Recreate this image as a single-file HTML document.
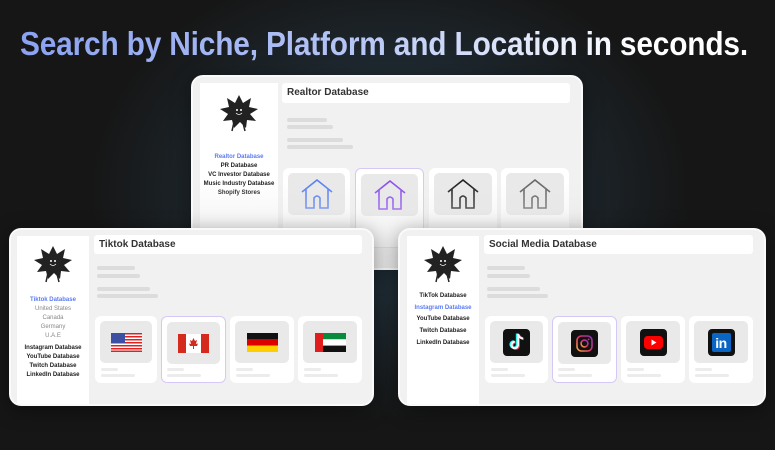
<!DOCTYPE html>
<html><head><meta charset="utf-8"><style>
*{margin:0;padding:0;box-sizing:border-box}
body{width:775px;height:450px;overflow:hidden;background:#161616;font-family:"Liberation Sans",sans-serif;position:relative}
.glow{position:absolute;left:0;top:0;width:775px;height:450px;background:radial-gradient(ellipse 300px 230px at 390px 190px,rgba(75,120,145,.8) 0%,rgba(45,75,95,.45) 40%,rgba(22,22,22,0) 100%)}
h1{position:absolute;left:20px;top:25px;white-space:nowrap;font-size:33px;font-weight:bold;letter-spacing:-0.2px;background:linear-gradient(90deg,#8aa2f2 0%,#b4c4f4 45%,#ffffff 85%);-webkit-background-clip:text;background-clip:text;color:transparent;transform-origin:left top}
.card{position:absolute;background:#f1f1f1;border-radius:12px;border:2px solid #fafafa;box-shadow:0 4px 20px rgba(0,0,0,.4);overflow:hidden}
.side{position:absolute;background:#fff;text-align:center}
.hdr{position:absolute;background:#fff;border-radius:3px;font-weight:bold;font-size:10px;color:#333;padding-left:5px;line-height:19px}
.sk{position:absolute;height:4px;border-radius:2px;background:#dcdcdc}
.tile{position:absolute;background:#fff;border-radius:6px}
.tile.sel{border:1px solid #d6c8f6}
.inner{position:absolute;left:5px;top:5px;right:5px;height:42px;background:#e9e9e9;border-radius:5px;display:flex;align-items:center;justify-content:center}
.tl1,.tl2{position:absolute;height:3px;background:#ececec;border-radius:2px;left:6px}
.tl1{top:52px;width:17px}.tl2{top:58px;width:34px}
.nav{font-size:6px;font-weight:bold;color:#222;line-height:9px}
.nav .a{color:#5b7cf5}.nav .g{color:#888;font-weight:normal}
</style></head><body>
<div class="glow"></div>
<h1>Search by Niche, Platform and Location in seconds.</h1>

<!-- Top card -->
<div class="card" style="left:191px;top:75px;width:392px;height:195px">
 <div class="side" style="left:7px;top:6px;width:78px;height:190px">
  <svg width="40" height="42" viewBox="0 0 40 42" style="margin-top:10px"><polygon points="20,2 24,10 32,5 30,14 39,16 31,21 37,28 28,27 27,35 21,29 15,35 13,27 4,28 9,21 1,16 10,14 8,5 16,10" fill="#222"/><path d="M15 29 L13 38 M24 30 L26 38" stroke="#222" stroke-width="1.5" fill="none"/><circle cx="18" cy="17" r="1" fill="#fff"/><circle cx="22" cy="17" r="1" fill="#fff"/><path d="M17 20 Q20 23 23 20" stroke="#fff" stroke-width=".8" fill="none"/></svg>
  <div class="nav" style="margin-top:13px"><div class="a">Realtor Database</div><div>PR Database</div><div>VC Investor Database</div><div>Music Industry Database</div><div>Shopify Stores</div></div>
 </div>
 <div class="hdr" style="left:89px;top:6px;width:288px;height:20px">Realtor Database</div>
 <div class="sk" style="left:94px;top:41px;width:40px"></div><div class="sk" style="left:94px;top:48px;width:46px"></div>
 <div class="sk" style="left:94px;top:61px;width:56px"></div><div class="sk" style="left:94px;top:68px;width:66px"></div>
 <div class="tile" style="left:90px;top:91px;width:67px;height:80px"><div class="inner"><svg width="34" height="32" viewBox="0 0 34 32"><path d="M2 14 L17 2 L32 14 M6 11 V30 H14 V20 Q17 16 20 20 V30 H28 V11" stroke="#5b80f5" stroke-width="1.6" fill="none"/></svg></div></div>
 <div class="tile sel" style="left:162px;top:91px;width:69px;height:80px"><div class="inner"><svg width="34" height="32" viewBox="0 0 34 32"><path d="M2 14 L17 2 L32 14 M6 11 V30 H14 V20 Q17 16 20 20 V30 H28 V11" stroke="#8c4ff0" stroke-width="1.6" fill="none"/></svg></div></div>
 <div class="tile" style="left:236px;top:91px;width:68px;height:80px"><div class="inner"><svg width="34" height="32" viewBox="0 0 34 32"><path d="M2 14 L17 2 L32 14 M6 11 V30 H14 V20 Q17 16 20 20 V30 H28 V11" stroke="#222" stroke-width="1.6" fill="none"/></svg></div></div>
 <div class="tile" style="left:308px;top:91px;width:68px;height:80px"><div class="inner"><svg width="34" height="32" viewBox="0 0 34 32"><path d="M2 14 L17 2 L32 14 M6 11 V30 H14 V20 Q17 16 20 20 V30 H28 V11" stroke="#666" stroke-width="1.6" fill="none"/></svg></div></div>
 <div style="position:absolute;left:0;top:105px;width:100%;height:90px;background:linear-gradient(rgba(255,255,255,0),rgba(230,230,230,.85))"></div>
</div>

<!-- Left card -->
<div class="card" style="left:9px;top:228px;width:365px;height:178px">
 <div class="side" style="left:6px;top:6px;width:72px;height:168px">
  <svg width="40" height="42" viewBox="0 0 40 42" style="margin-top:8px"><polygon points="20,2 24,10 32,5 30,14 39,16 31,21 37,28 28,27 27,35 21,29 15,35 13,27 4,28 9,21 1,16 10,14 8,5 16,10" fill="#222"/><path d="M15 29 L13 38 M24 30 L26 38" stroke="#222" stroke-width="1.5" fill="none"/><circle cx="18" cy="17" r="1" fill="#fff"/><circle cx="22" cy="17" r="1" fill="#fff"/><path d="M17 20 Q20 23 23 20" stroke="#fff" stroke-width=".8" fill="none"/></svg>
  <div class="nav" style="margin-top:5px"><div class="a">Tiktok Database</div><div class="g">United States</div><div class="g">Canada</div><div class="g">Germany</div><div class="g">U.A.E</div><div style="margin-top:3px">Instagram Database</div><div>YouTube Database</div><div>Twitch Database</div><div>LinkedIn Database</div></div>
 </div>
 <div class="hdr" style="left:83px;top:5px;width:268px;height:19px">Tiktok Database</div>
 <div class="sk" style="left:86px;top:36px;width:38px"></div><div class="sk" style="left:86px;top:44px;width:43px"></div>
 <div class="sk" style="left:86px;top:57px;width:53px"></div><div class="sk" style="left:86px;top:64px;width:61px"></div>
 <div class="tile" style="left:84px;top:86px;width:62px;height:67px"><div class="inner"><svg width="31" height="19" viewBox="0 0 31 19"><rect width="31" height="19" fill="#fff"/><g fill="#d22"><rect y="0" width="31" height="1.5"/><rect y="3" width="31" height="1.5"/><rect y="6" width="31" height="1.5"/><rect y="9" width="31" height="1.5"/><rect y="12" width="31" height="1.5"/><rect y="15" width="31" height="1.5"/><rect y="17.5" width="31" height="1.5"/></g><rect width="14" height="10" fill="#3c4fa0"/></svg></div></div>
 <div class="tile sel" style="left:150px;top:86px;width:65px;height:67px"><div class="inner"><svg width="31" height="19" viewBox="0 0 31 19"><rect width="31" height="19" fill="#fff"/><rect width="8" height="19" fill="#d52b1e"/><rect x="23" width="8" height="19" fill="#d52b1e"/><path d="M15.5 4 L17 7 L19 6 L18 10 L20 9.5 L19 12 L16 12 L16 15 L15 15 L15 12 L12 12 L11 9.5 L13 10 L12 6 L14 7 Z" fill="#d52b1e"/></svg></div></div>
 <div class="tile" style="left:219px;top:86px;width:64px;height:67px"><div class="inner"><svg width="31" height="19" viewBox="0 0 31 19"><rect width="31" height="6.4" fill="#111"/><rect y="6.3" width="31" height="6.4" fill="#dd0000"/><rect y="12.6" width="31" height="6.4" fill="#ffce00"/></svg></div></div>
 <div class="tile" style="left:287px;top:86px;width:64px;height:67px"><div class="inner"><svg width="31" height="19" viewBox="0 0 31 19"><rect width="31" height="6.4" fill="#0a8a3c"/><rect y="6.3" width="31" height="6.4" fill="#fff"/><rect y="12.6" width="31" height="6.4" fill="#111"/><rect width="8" height="19" fill="#e01e1e"/></svg></div></div>
 <div class="tile" style="left:84px;top:86px;width:62px;height:67px;background:none"><div class="tl1"></div><div class="tl2"></div></div>
 <div class="tile" style="left:150px;top:86px;width:65px;height:67px;background:none"><div class="tl1"></div><div class="tl2"></div></div>
 <div class="tile" style="left:219px;top:86px;width:64px;height:67px;background:none"><div class="tl1"></div><div class="tl2"></div></div>
 <div class="tile" style="left:287px;top:86px;width:64px;height:67px;background:none"><div class="tl1"></div><div class="tl2"></div></div>
</div>

<!-- Right card -->
<div class="card" style="left:398px;top:228px;width:368px;height:178px">
 <div class="side" style="left:7px;top:6px;width:72px;height:168px">
  <svg width="40" height="42" viewBox="0 0 40 42" style="margin-top:8px"><polygon points="20,2 24,10 32,5 30,14 39,16 31,21 37,28 28,27 27,35 21,29 15,35 13,27 4,28 9,21 1,16 10,14 8,5 16,10" fill="#222"/><path d="M15 29 L13 38 M24 30 L26 38" stroke="#222" stroke-width="1.5" fill="none"/><circle cx="18" cy="17" r="1" fill="#fff"/><circle cx="22" cy="17" r="1" fill="#fff"/><path d="M17 20 Q20 23 23 20" stroke="#fff" stroke-width=".8" fill="none"/></svg>
  <div class="nav" style="line-height:11.7px"><div>TikTok Database</div><div class="a">Instagram Database</div><div>YouTube Database</div><div>Twitch Database</div><div>LinkedIn Database</div></div>
 </div>
 <div class="hdr" style="left:84px;top:5px;width:269px;height:19px">Social Media Database</div>
 <div class="sk" style="left:87px;top:36px;width:38px"></div><div class="sk" style="left:87px;top:44px;width:43px"></div>
 <div class="sk" style="left:87px;top:57px;width:53px"></div><div class="sk" style="left:87px;top:64px;width:61px"></div>
 <div class="tile" style="left:85px;top:86px;width:63px;height:67px"><div class="inner"><div style="width:27px;height:27px;background:#111;border-radius:4px;display:flex;align-items:center;justify-content:center"><svg width="16" height="18" viewBox="0 0 16 18"><path d="M9 1 V12 A3.2 3.2 0 1 1 5.8 8.8 M9 1 Q10 5 14 5.5" stroke="#25f4ee" stroke-width="2.4" fill="none" transform="translate(-1,-0.5)"/><path d="M9 1 V12 A3.2 3.2 0 1 1 5.8 8.8 M9 1 Q10 5 14 5.5" stroke="#fe2c55" stroke-width="2.4" fill="none" transform="translate(0.8,0.5)"/><path d="M9 1 V12 A3.2 3.2 0 1 1 5.8 8.8 M9 1 Q10 5 14 5.5" stroke="#fff" stroke-width="2" fill="none"/></svg></div></div></div>
 <div class="tile sel" style="left:152px;top:86px;width:65px;height:67px"><div class="inner"><div style="width:27px;height:27px;background:#111;border-radius:4px;display:flex;align-items:center;justify-content:center"><svg width="17" height="17" viewBox="0 0 17 17"><defs><linearGradient id="ig" x1="0" y1="1" x2="1" y2="0"><stop offset="0" stop-color="#fbb03b"/><stop offset=".5" stop-color="#e1306c"/><stop offset="1" stop-color="#833ab4"/></linearGradient></defs><rect x="1" y="1" width="15" height="15" rx="4.5" stroke="url(#ig)" stroke-width="1.6" fill="none"/><circle cx="8.5" cy="8.5" r="3.4" stroke="url(#ig)" stroke-width="1.6" fill="none"/><circle cx="12.6" cy="4.4" r=".9" fill="#c13584"/></svg></div></div></div>
 <div class="tile" style="left:221px;top:86px;width:64px;height:67px"><div class="inner"><div style="width:27px;height:27px;background:#111;border-radius:4px;display:flex;align-items:center;justify-content:center"><svg width="19" height="13" viewBox="0 0 19 13"><rect width="19" height="13" rx="3.5" fill="#f00"/><path d="M7.5 3.5 L12.5 6.5 L7.5 9.5Z" fill="#fff"/></svg></div></div></div>
 <div class="tile" style="left:289px;top:86px;width:64px;height:67px"><div class="inner"><div style="width:27px;height:27px;background:#111;border-radius:4px;display:flex;align-items:center;justify-content:center"><div style="width:19px;height:19px;background:#0a66c2;border-radius:2px;color:#fff;font-weight:bold;font-size:14px;line-height:20px;text-align:center;letter-spacing:-0.5px">in</div></div></div></div>
 <div class="tile" style="left:85px;top:86px;width:63px;height:67px;background:none"><div class="tl1"></div><div class="tl2"></div></div>
 <div class="tile" style="left:152px;top:86px;width:65px;height:67px;background:none"><div class="tl1"></div><div class="tl2"></div></div>
 <div class="tile" style="left:221px;top:86px;width:64px;height:67px;background:none"><div class="tl1"></div><div class="tl2"></div></div>
 <div class="tile" style="left:289px;top:86px;width:64px;height:67px;background:none"><div class="tl1"></div><div class="tl2"></div></div>
</div>
<script>
var h=document.querySelector('h1');var r=h.getBoundingClientRect().width;h.style.transform='scaleX('+(728/r)+')';
</script>
</body></html>
